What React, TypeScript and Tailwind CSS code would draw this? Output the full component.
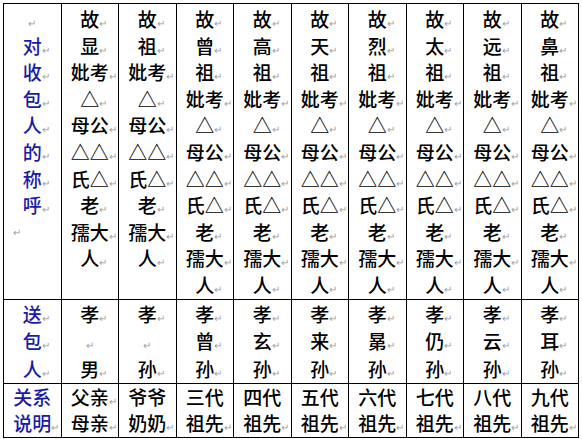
import React from "react";

type Line = { t: string; m?: boolean };

const P = () => (
  <span className="inline-block w-0 text-left align-baseline leading-[10px] text-[10px] font-normal text-[#a0a0a0]">↵</span>
);

const L = ({ t, m = true }: Line) => (
  <div>
    {t === "" ? (
      <span className="inline-block leading-[10px] text-[10px] font-normal text-[#a0a0a0]">↵</span>
    ) : (
      <>
        {t}
        {m && <P />}
      </>
    )}
  </div>
);

const gen = ["曾", "高", "天", "烈", "太", "远", "鼻"];
const heirs = ["曾", "玄", "来", "晜", "仍", "云", "耳"];

const tail: Line[] = [
  { t: "妣考" },
  { t: "△" },
  { t: "母公" },
  { t: "△△" },
  { t: "氏△" },
  { t: "老" },
  { t: "孺大" },
  { t: "人" },
];

const top: Line[][] = [
  [{ t: "故" }, { t: "显" }, ...tail],
  [{ t: "故" }, { t: "祖" }, ...tail],
  ...gen.map((g) => [{ t: "故" }, { t: g }, { t: "祖" }, ...tail]),
];

const mid: Line[][] = [
  [{ t: "孝" }, { t: "" }, { t: "男" }],
  [{ t: "孝" }, { t: "" }, { t: "孙" }],
  ...heirs.map((h) => [{ t: "孝" }, { t: h }, { t: "孙" }]),
];

const bottom: Line[][] = [
  [{ t: "父亲" }, { t: "母亲" }],
  [{ t: "爷爷", m: false }, { t: "奶奶" }],
  ...["三", "四", "五", "六", "七", "八", "九"].map((n) => [
    { t: n + "代", m: false },
    { t: "祖先" },
  ]),
];

const cell = "border border-black p-0 text-center";

export default function App() {
  return (
    <div className="w-[582px] h-[439px] bg-white pt-[3px] pl-[3px] font-['Noto_Sans_CJK_SC',sans-serif] text-[19px] font-medium text-black">
      <table className="table-fixed border-collapse w-[575px]">
        <colgroup>
          {Array.from({ length: 10 }).map((_, i) => (
            <col key={i} className="w-[57.5px]" />
          ))}
        </colgroup>
        <tbody>
          <tr className="h-[294px]">
            <td className={`${cell} align-top pt-[2px] leading-[26.6px] text-[#1a1aa8]`}>
              <L t="" />
              {["对", "收", "包", "人", "的", "称", "呼"].map((c) => (
                <L key={c} t={c} />
              ))}
              <div className="text-left pl-[9px] text-[10px] font-normal text-[#a0a0a0]">↵</div>
            </td>
            {top.map((col, i) => (
              <td key={i} className={`${cell} align-top pt-[2px] leading-[26.6px]`}>
                {col.map((l, j) => (
                  <L key={j} {...l} />
                ))}
              </td>
            ))}
          </tr>
          <tr className="h-[84px]">
            <td className={`${cell} align-middle leading-[27.5px] text-[#1a1aa8]`}>
              <L t="送" />
              <L t="包" />
              <L t="人" />
            </td>
            {mid.map((col, i) => (
              <td key={i} className={`${cell} align-middle leading-[27.5px]`}>
                {col.map((l, j) => (
                  <L key={j} {...l} />
                ))}
              </td>
            ))}
          </tr>
          <tr className="h-[54px]">
            <td className={`${cell} align-middle leading-[26px] text-[#1a1aa8]`}>
              <L t="关系" m={false} />
              <L t="说明" />
            </td>
            {bottom.map((col, i) => (
              <td key={i} className={`${cell} align-middle leading-[26px]`}>
                {col.map((l, j) => (
                  <L key={j} {...l} />
                ))}
              </td>
            ))}
          </tr>
        </tbody>
      </table>
    </div>
  );
}
